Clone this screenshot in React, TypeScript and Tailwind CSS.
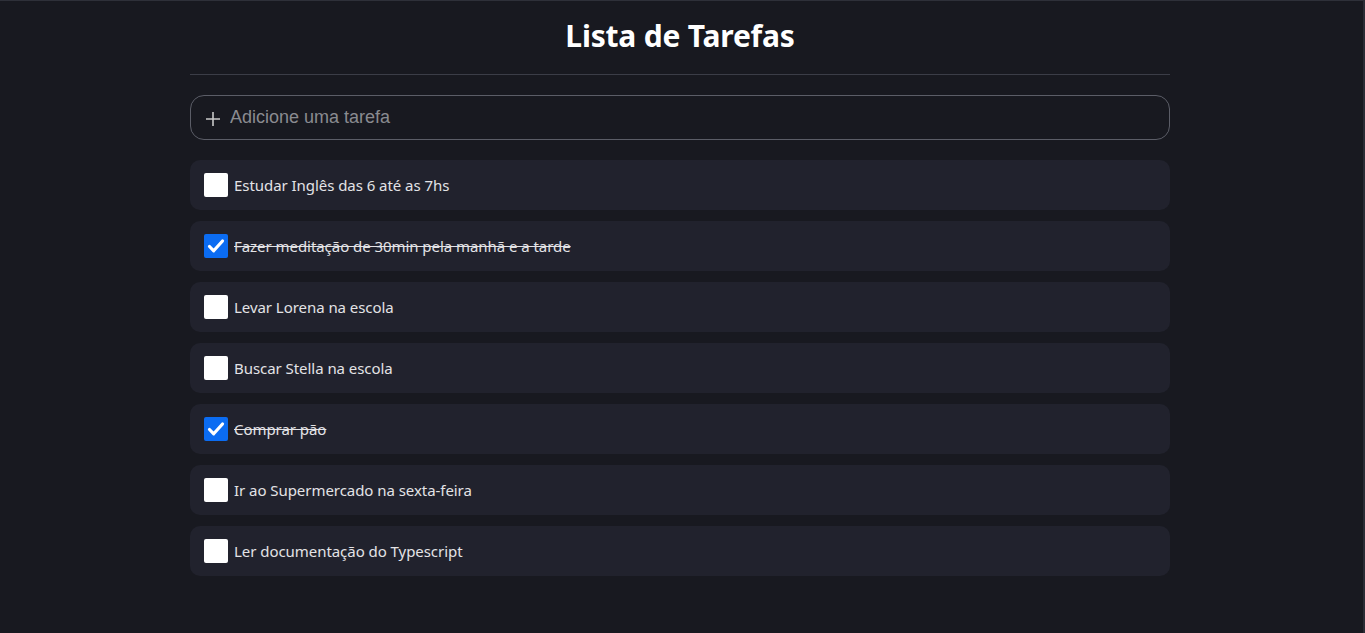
import { useState } from 'react';

type Task = { id: number; title: string; done: boolean };

const initialTasks: Task[] = [
  { id: 1, title: 'Estudar Inglês das 6 até as 7hs', done: false },
  { id: 2, title: 'Fazer meditação de 30min pela manhã e a tarde', done: true },
  { id: 3, title: 'Levar Lorena na escola', done: false },
  { id: 4, title: 'Buscar Stella na escola', done: false },
  { id: 5, title: 'Comprar pão', done: true },
  { id: 6, title: 'Ir ao Supermercado na sexta-feira', done: false },
  { id: 7, title: 'Ler documentação do Typescript', done: false },
];

export default function App() {
  const [tasks, setTasks] = useState<Task[]>(initialTasks);
  const [text, setText] = useState('');

  const toggle = (id: number) =>
    setTasks(ts => ts.map(t => (t.id === id ? { ...t, done: !t.done } : t)));

  return (
    <div
      className="min-h-[633px] bg-[#181920] border-t border-[#2e3039] border-r-2 border-r-[#2a2c35]"
      style={{ fontFamily: '"Noto Sans", "Open Sans", sans-serif' }}
    >
      <div className="w-[980px] ml-[190px] flex flex-col">
        {/* Header */}
        <h1 className="text-center text-white font-bold text-[30px] leading-none pt-[20px] pb-[23px] tracking-[-0.2px]">
          Lista de Tarefas
        </h1>
        <div className="h-px bg-[#3b3d47]" />

        {/* Add task */}
        <form
          onSubmit={e => {
            e.preventDefault();
            if (!text.trim()) return;
            setTasks(ts => [...ts, { id: Date.now(), title: text.trim(), done: false }]);
            setText('');
          }}
          className="mt-5 h-[45px] flex items-center gap-[8px] px-[13px] rounded-[14px] border border-[#5b5d67]"
        >
          <svg width="18" height="18" viewBox="0 0 18 18" className="shrink-0 mt-[2px]">
            <path d="M9 2v14M2 9h14" stroke="#c9c9c9" strokeWidth="1.6" />
          </svg>
          <input
            value={text}
            onChange={e => setText(e.target.value)}
            placeholder="Adicione uma tarefa"
            className="flex-1 bg-transparent outline-none text-[18px] text-[#e6e6e6] placeholder:text-[#8a8b90]"
            style={{ fontFamily: '"Liberation Sans", Arial, sans-serif' }}
          />
        </form>

        {/* Task list */}
        <ul className="mt-5 flex flex-col gap-[11px]">
          {tasks.map(t => (
            <li
              key={t.id}
              onClick={() => toggle(t.id)}
              className="h-[50px] flex items-center gap-[6px] px-[14px] rounded-[10px] bg-[#21222d] cursor-pointer"
            >
              {t.done ? (
                <span className="w-[24px] h-[24px] rounded-[2px] bg-[#0b6cf2] flex items-center justify-center shrink-0">
                  <svg width="20" height="20" viewBox="0 0 20 20">
                    <path d="M3.5 10.5l4.2 4.3L16.5 5" fill="none" stroke="#fff" strokeWidth="3.2" strokeLinecap="round" strokeLinejoin="round" />
                  </svg>
                </span>
              ) : (
                <span className="w-[24px] h-[24px] rounded-[2px] bg-white shrink-0" />
              )}
              <span className={`text-[15px] tracking-[-0.05px] text-[#e3e3e6] ${t.done ? 'line-through' : ''}`}>
                {t.title}
              </span>
            </li>
          ))}
        </ul>
      </div>
    </div>
  );
}
